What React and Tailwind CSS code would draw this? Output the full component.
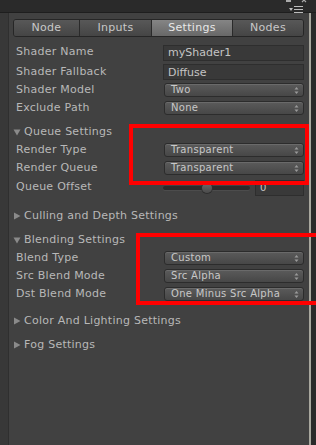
import React from "react";

const Arrow = () => (
  <svg width="5" height="9" viewBox="0 0 5 9" className="shrink-0">
    <path d="M2.5 1 L4.5 3.5 L0.5 3.5 Z" fill="#9a9a9a" />
    <path d="M2.5 8 L4.5 5.5 L0.5 5.5 Z" fill="#9a9a9a" />
  </svg>
);

function Dropdown({ value }) {
  return (
    <div className="flex h-[14px] w-[140px] items-center justify-between rounded-[3px] border border-[#2c2c2c] bg-gradient-to-b from-[#5b5b5b] to-[#474747] pl-[6px] pr-[4px] text-[10px] leading-none text-[#c8c8c8] shadow-[inset_0_1px_0_#6a6a6a]">
      <span className="tracking-[0.3px]">{value}</span>
      <Arrow />
    </div>
  );
}

function TextField({ value }) {
  return (
    <div className="flex h-[16px] w-[141px] items-center border border-[#2e2e2e] bg-[#393939] pl-[4px] text-[11px] leading-none text-[#c4c4c4]">
      {value}
    </div>
  );
}

function Row({ label, children, h = "h-[18px]" }) {
  return (
    <div className={`flex ${h} items-center justify-between pl-[3px]`}>
      <span className="tracking-[0.25px]">{label}</span>
      <div className="flex">{children}</div>
    </div>
  );
}

function Header({ open, label }) {
  return (
    <div className="flex h-[18px] items-center pl-[0px]">
      <svg width="8" height="8" viewBox="0 0 8 8" className="mr-[3px] shrink-0">
        {open ? (
          <path d="M0.5 1.5 L7.5 1.5 L4 7.5 Z" fill="#8a8a8a" />
        ) : (
          <path d="M1 0.5 L7.5 4 L1 7.5 Z" fill="#8a8a8a" />
        )}
      </svg>
      <span className="tracking-[0.25px]">{label}</span>
    </div>
  );
}

export default function App() {
  const tabs = ["Node", "Inputs", "Settings", "Nodes"];
  const widths = ["w-[65px]", "w-[72px]", "w-[81px]", "w-[71px]"];
  return (
    <div
      className="relative flex h-[445px] w-[316px] flex-col overflow-hidden bg-[#282828] text-[11px] text-[#b8b8b8]"
      style={{ fontFamily: '"DejaVu Sans", Verdana, sans-serif' }}
    >
      {/* top bar */}
      <div className="relative h-[13px] shrink-0 border-b border-[#1e1e1e] bg-[#2a2a2a]">
        <div className="absolute right-[25px] top-0 h-[2px] w-[5px] bg-[#aaaaaa]" />
        <svg className="absolute right-[9px] top-0" width="6" height="3" viewBox="0 0 6 3">
          <path d="M0 -2 L4 2 M4 -2 L0 2" stroke="#aaaaaa" strokeWidth="1.2" transform="translate(1 0)" />
        </svg>
        <div className="absolute right-[13px] top-[6px] flex items-center gap-[1px]">
          <svg width="4" height="3" viewBox="0 0 4 3">
            <path d="M0 0 L4 0 L2 3 Z" fill="#bdbdbd" />
          </svg>
          <svg width="9" height="7" viewBox="0 0 9 7">
            <rect x="0" y="0" width="9" height="1" fill="#bdbdbd" />
            <rect x="0" y="3" width="9" height="1" fill="#bdbdbd" />
            <rect x="0" y="6" width="9" height="1" fill="#bdbdbd" />
          </svg>
        </div>
      </div>

      <div className="flex flex-1">
        <div className="w-[9px] shrink-0 border-r border-[#2f2f2f] bg-[#383838]" />
        <div className="flex flex-1 flex-col bg-[#414141] pl-[4px] pr-[5px] pt-[6px]">
          {/* tabs */}
          <div className="flex h-[18px] overflow-hidden rounded-[3px] border border-[#262626]">
            {tabs.map((t, i) => (
              <div
                key={t}
                className={`flex ${widths[i]} items-center justify-center text-[11px] tracking-[0.3px] ${
                  i > 0 ? "border-l border-[#2a2a2a]" : ""
                } ${
                  t === "Settings"
                    ? "bg-gradient-to-b from-[#858585] to-[#686868] text-[#e8e8e8]"
                    : "bg-gradient-to-b from-[#585858] to-[#454545] text-[#c8c8c8]"
                }`}
              >
                {t}
              </div>
            ))}
          </div>

          <div className="mt-[5px] flex flex-col">
            <Row label="Shader Name" h="h-[21px]">
              <TextField value="myShader1" />
            </Row>
            <Row label="Shader Fallback" h="h-[18px]">
              <TextField value="Diffuse" />
            </Row>
            <Row label="Shader Model">
              <Dropdown value="Two" />
            </Row>
            <Row label="Exclude Path">
              <Dropdown value="None" />
            </Row>
            <div className="h-[6px]" />
            <Header open label="Queue Settings" />
            <Row label="Render Type">
              <Dropdown value="Transparent" />
            </Row>
            <Row label="Render Queue">
              <Dropdown value="Transparent" />
            </Row>
            <Row label="Queue Offset" h="h-[21px]">
              <div className="flex items-center">
                <div className="relative flex h-[14px] w-[87px] items-center">
                  <div className="h-[4px] w-full rounded-full bg-[#2b2b2b] shadow-[0_1px_0_#4c4c4c]" />
                  <div className="absolute left-[39px] top-[2px] h-[10px] w-[10px] rounded-full bg-gradient-to-b from-[#6b6b6b] to-[#4a4a4a] shadow-[0_0_0_1px_#2e2e2e]" />
                </div>
                <div className="ml-[5px] flex h-[16px] w-[49px] items-center border border-[#2e2e2e] bg-[#393939] pl-[4px] text-[10px] leading-none text-[#c4c4c4]">
                  0
                </div>
              </div>
            </Row>
            <div className="h-[9px]" />
            <Header label="Culling and Depth Settings" />
            <div className="h-[6px]" />
            <Header open label="Blending Settings" />
            <Row label="Blend Type">
              <Dropdown value="Custom" />
            </Row>
            <Row label="Src Blend Mode">
              <Dropdown value="Src Alpha" />
            </Row>
            <Row label="Dst Blend Mode">
              <Dropdown value="One Minus Src Alpha" />
            </Row>
            <div className="h-[9px]" />
            <Header label="Color And Lighting Settings" />
            <div className="h-[6px]" />
            <Header label="Fog Settings" />
          </div>
        </div>
        <div className="w-[2px] shrink-0 bg-[#a8a79e]" />
        <div className="w-[5px] shrink-0 bg-[#2a2a2a]" />
      </div>

      {/* annotation rectangles */}
      <div className="pointer-events-none absolute left-[129px] top-[124px] h-[61px] w-[180px] border-[4px] border-[#ff0000]" />
      <div className="pointer-events-none absolute left-[136px] top-[233px] h-[72px] w-[185px] border-[4px] border-[#ff0000]" />
    </div>
  );
}
